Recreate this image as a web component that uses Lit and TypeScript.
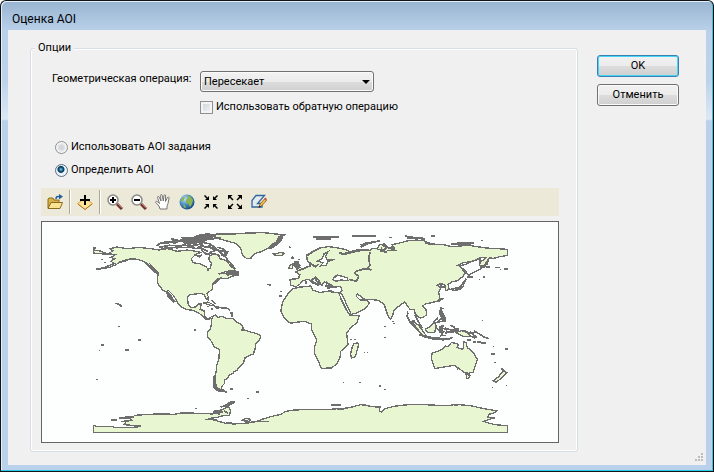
import { LitElement, html, css, svg } from "lit";
import { customElement, state } from "lit/decorators.js";

// Map geometry is in thirds of a map unit. The eastern half has its own origin.
const WEST_LAND = [
  // North and Central America
  "M75 95L86 86 78 80 100 75 130 80 165 76 200 80 225 84 250 80 280 88 310 84 335 88 350 91 334 98 322 110 326 122 350 126 365 133 372 142 379 138 382 124 374 112 376 102 390 96 402 98 408 110 418 113 430 118 440 134 453 140 450 147 428 148 404 156 425 154 432 160 446 150 464 156 462 160 445 162 428 170 408 168 398 180 386 188 386 200 378 207 368 214 373 224 372 234 364 228 362 220 350 214 335 216 318 218 311 226 312 246 322 257 335 255 342 246 352 246 348 262 360 266 362 284 372 290 380 286 376 292 366 292 354 280 342 272 326 265 306 262 294 256 284 248 278 236 268 220 254 206 250 208 262 222 270 238 262 234 254 224 246 210 236 204 224 188 220 180 222 155 212 146 200 136 190 124 175 116 155 111 135 111 122 118 108 121 92 130 76 136 55 140 35 142 55 138 75 131 92 124 80 118 92 110 80 106 95 98Z",
  // South America
  "M382 294L386 284 394 279 402 286 415 283 430 290 448 290 458 300 470 306 476 314 480 324 500 330 522 336 530 342 527 354 516 364 514 378 508 396 494 402 483 408 478 424 466 434 458 446 450 450 448 454 436 458 430 470 422 474 422 484 414 492 412 500 418 504 428 510 408 508 394 502 389 492 390 470 396 452 398 430 405 410 406 382 390 374 382 358 370 344 370 330 380 320 382 306Z",
  // Greenland
  "M378 40L400 36 450 36 490 33 540 32 575 36 605 38 590 42 585 52 588 60 572 68 560 76 550 80 535 88 520 92 508 98 502 108 490 110 482 106 474 96 472 84 466 74 455 64 440 60 425 56 405 50Z",
  // Antarctica
  "M28 631V611H34V614H88V617H135L168 614V612L120 608 126 600 112 598 144 596 140 590 104 588 128 585 148 584 152 580 200 577 270 577 292 573 350 574 386 576 400 568 420 560 434 554 440 566 436 580 412 582 400 586 372 590 390 594 404 598 424 604 450 606 480 604 510 601 534 592 560 584 590 577 606 568 630 564 660 563 690 562 730 563 760 560 790 558 808 554 830 548 850 550 860 554 888 555 886 568 892 570 904 560 930 553 960 549 1000 547 1040 549 1096 551 1112 547 1150 550 1170 553 1190 558 1218 563 1238 566 1234 571 1215 577 1212 585 1232 588 1216 592 1198 598 1216 604 1234 608 1270 611V631Z",
  // Iceland, Cuba, Aleutian end, Antarctic bay
  "M564 94L575 96 588 91 601 94 596 100 574 100ZM357 243L372 240 392 250 380 250ZM394 254L408 256 400 260ZM28 84L45 86 62 92 78 98 60 96 30 94ZM474 596L484 589 500 592 496 598Z",
];

const EAST_LAND = [
  // Eurasia
  "M62 190L60 172 85 170 90 158 76 150 88 145 100 140 118 132 122 124 112 118 110 102 122 94 135 86 150 78 175 74 200 77 225 82 236 88 228 96 208 92 216 98 238 94 262 88 280 84 298 86 306 80 322 80 328 68 345 66 356 78 374 80 366 68 385 64 400 60 415 56 440 54 460 56 485 66 520 68 546 74 570 72 600 70 620 74 650 78 712 82 712 100 690 104 668 110 658 106 652 126 636 138 628 130 634 118 648 108 632 106 610 118 580 122 562 130 578 136 588 150 578 164 562 176 545 180 534 188 538 202 528 206 522 188 510 184 502 190 512 198 506 212 510 230 500 238 484 242 466 246 458 252 468 262 470 278 460 286 450 288 436 276 432 262 420 262 410 248 404 240 390 250 372 264 368 280 362 292 354 282 346 258 342 246 325 235 300 232 284 232 262 216 258 222 270 234 290 234 298 244 285 260 262 272 242 278 236 262 222 240 212 222 208 212 216 206 212 194 190 195 176 194 168 186 172 182 162 180 156 190 146 184 134 170 124 172 134 182 146 190 126 182 116 172 98 176 90 186 78 194Z",
  // Africa
  "M65 202L84 196 122 192 128 204 150 212 168 208 208 212 214 236 228 262 240 280 268 280 262 300 240 320 230 334 234 368 212 388 210 408 200 426 184 438 154 439 146 420 134 394 133 378 140 356 134 340 124 322 124 306 104 298 84 300 62 304 46 292 32 268 38 240 52 218Z",
  // Madagascar, Australia, New Guinea, Borneo, New Zealand, Tasmania, Malaya
  "M246 378L252 366 262 362 266 368 256 404 244 408 242 394Z",
  "M486 394L502 388 520 380 526 372 534 374 544 362 560 364 566 368 562 376 576 382 580 378 582 360 588 362 592 378 600 382 610 392 622 412 614 436 610 450 594 454 580 450 566 438 552 430 528 434 494 440 490 426 484 410Z",
  "M550 326L562 330 576 326 592 332 604 344 582 344 564 336ZM466 322L480 314 494 300 498 312 494 332 474 332ZM670 476L686 464 700 446 710 452 696 466 678 482ZM588 456L600 460 596 470 590 468ZM426 296L446 310 468 340 460 342 442 324Z",
  // Great Britain, Ireland, Japan, Java
  "M74 120L84 118 88 134 98 142 82 146 78 136ZM58 132L68 126 68 140 56 140ZM540 202L556 198 572 194 584 178 588 170 578 196 560 206ZM446 338L470 342 500 350 530 350 520 354 480 350Z",
];

const EAST_SEAS = [
  "M188 172L200 160 214 162 232 168 234 176 212 174 198 178Z",
  "M142 118L156 110 162 96 174 90 166 104 172 114 194 112 174 118 168 130 150 132 160 122Z",
  "M206 214L214 214 242 272 238 278Z",
  "M606 118L632 110 628 124 634 140 620 146 596 160 586 146 568 132 590 126Z",
];

const WEST_COAST = [
  "M218 72L232 62 250 64 270 56 286 58 300 48 320 50 350 38 378 36 M226 76L256 70 290 72 310 62 344 68 370 52 410 48 M240 60L270 62 300 54 340 58 360 44 396 42 M290 46L330 46 360 40",
  "M222 66L250 58 276 64 M234 80L262 76 M262 50L300 60 326 72 350 66 M276 80L300 68 334 78 M306 58L330 80 352 78 372 88 M344 58L362 76 384 70 396 80",
  "M230 80L280 76 318 76 338 80 350 72 376 76 392 84 M350 82L366 96 390 94 408 102 M360 62L380 66 390 78 408 86 430 92 424 104 412 98 M376 92L400 84 418 98 434 88 M400 76L416 80 432 96",
  "M330 98L346 104 354 98 M424 104L436 120 452 138 M184 122L220 152 M190 128L222 158 M248 210L274 240 M106 120L136 112 M386 186L404 168 M372 138V146",
  "M92 244L104 246 114 254 M550 187L562 190 M566 78L592 54 596 42 M438 272H444V286M382 234L394 246M410 258H428L438 264 M372 226V234",
  "M392 460V498L426 510 M410 556L452 538 M386 570H416 M290 572H330 M364 592H398 M104 590L150 584 M206 576H258M80 594H100M500 598H556M426 602H444 M404 570V580M420 566L432 574",
];

const EAST_COAST = [
  "M128 44H206 M138 50H184 M246 42H318 M272 76L290 66 330 56 M404 42L430 46 464 52 M410 48H458 M560 62H612 M356 46H366 M482 42H496M544 66H604 M272 70L292 62 312 60 M224 94L262 84 298 82",
  "M100 140L124 130 M118 124L136 134 146 126 M560 206L590 170 M640 138L656 110 M576 142L590 156 M590 164H608 M508 184L516 196 528 190 M502 240L520 228 M110 100L126 90 150 78 M464 62L486 68",
  "M116 172L138 186 152 188 146 174 134 164 M168 180L184 190 M188 170L204 158 M174 206L186 208M166 192H190 M132 168L150 176 M172 188V198L186 196 M108 186V178",
  "M300 90L296 110 300 130 294 138 304 144 284 140 258 148 254 154 266 162 260 178 236 172 M320 82L342 84 350 76 336 70 M350 86L374 84 362 74 M330 88L352 90M334 74V88",
  "M420 300L440 320 462 344 540 352 M410 280L420 300 434 296 M498 316L512 330 M524 318L560 330 M510 340H528 M524 326L510 344 M600 330L620 346 M612 326L644 346 658 350",
  "M512 318L530 322 528 336 M536 322L566 324 M532 330H552 M540 310L556 316 M536 352L548 346 M580 324L600 334 622 330 M600 342L616 348 M434 278L446 300 456 318 M412 268V282",
  "M512 254L516 276 528 290 M510 276L526 296 504 300 518 284 M634 132L660 136 M676 136H690 M66 104H70M56 74H60M694 440L708 450 M488 302L504 288",
];

const DARK_BLOBS = [
  "M290 52L330 44 360 36 396 38 384 48 366 52 356 66 336 62 320 66 300 60Z",
  "M584 40L594 44 586 62 562 80 550 78 562 66 574 60Z M196 124L226 152 220 158 198 136Z M474 318L484 324 470 328Z",
  "M388 462H396L398 494 418 506 426 512 398 508 388 496Z M414 554L438 538 456 540 430 556Z M388 566L414 562 412 574 390 576Z",
  "M432 144L464 146 466 158 452 160 424 156Z M246 206L258 214 274 238 268 242 250 224Z",
];
const DARK_BLOBS_EAST = [
  "M506 266L516 262 528 290 526 302 514 294Z M60 128L84 118 92 130 84 142 72 134Z",
  "M132 42H180V50H140ZM560 432L568 438 562 444ZM116 122L134 126 128 134Z M508 312L520 314 518 330 508 328Z M556 198L576 196 574 204 556 206Z",
];

// Islets: x, y, width
const ISLETS: number[][] = [
  [102, 313, 5], [162, 350, 9], [50, 367, 10], [44, 385, 5], [124, 380, 10], [330, 320, 7], [36, 472, 5],
  [438, 498, 10], [516, 508, 10], [490, 529, 6], [334, 558, 5], [616, 74, 6], [622, 104, 7], [642, 110, 5],
  [588, 206, 5], [586, 220, 8], [52, 110, 5], [60, 120, 5], [28, 74, 8], [368, 252, 6], [380, 258, 8],
  [900, 313, 5], [900, 345, 5], [924, 298, 6], [926, 303, 6], [840, 390, 4], [848, 390, 5], [776, 480, 5],
  [826, 480, 5], [884, 488, 8], [900, 502, 5], [798, 352, 5], [810, 352, 5], [1074, 257, 5], [1194, 295, 4],
  [1226, 371, 5], [1262, 379, 9], [1222, 392, 12], [1230, 420, 5], [1224, 496, 4], [1266, 490, 4],
  [1248, 140, 4], [1260, 138, 12], [1196, 162, 8], [1184, 172, 4], [1190, 54, 6], [970, 272, 4], [972, 288, 4],
  [1180, 356, 12], [1192, 360, 14], [1148, 352, 12], [1168, 358, 8], [1110, 318, 16], [1064, 326, 10], [1072, 310, 8],
  [740, 547, 30], [1110, 545, 12], [760, 559, 20],
];

const ICONS = {
  open: svg`<path d="M1 14V5l1-1h4l1 2h5v3" fill="#d9b24a" stroke="#8a6a1c"/><path d="M1 14.500L4 8.500h11.500L13 14.500Z" fill="#fbe391" stroke="#8a6a1c"/><path d="M9 5c0-3 2-2.500 4-2.500" fill="none" stroke="#235f9e" stroke-width="1.500"/><path d="M12 0l4 2.500-4 3z" fill="#235f9e"/>`,
  add: svg`<path d="M8 4.500L15.500 9.500 8 15.500 .5 9.500Z" fill="#ffe397" stroke="#dfa64b"/><path d="M1 10L8 15.500l7-5.500" fill="none" stroke="#a87831"/><path d="M7 1h2v4h4v2H9v4H7V7H3V5h4z" fill="#000"/>`,
  zoomIn: svg`<path d="M10 10l5 5" stroke="#70302c" stroke-width="3"/><path d="M11 10l4 4" stroke="#c08078"/><circle cx="6" cy="6" r="5" fill="#fff" stroke="#888" stroke-width="1.500"/><path d="M3 6h6M6 3v6" stroke="#000" stroke-width="2"/>`,
  zoomOut: svg`<path d="M10 10l5 5" stroke="#70302c" stroke-width="3"/><path d="M11 10l4 4" stroke="#c08078"/><circle cx="6" cy="6" r="5" fill="#fff" stroke="#888" stroke-width="1.500"/><path d="M3 6h6" stroke="#000" stroke-width="2"/>`,
  pan: svg`<path d="M5 15L4 12 .8 8.500c-.5-1.200 1-1.600 1.800-.7L4.500 9.500 2.500 3.500c-.2-1.300 1.300-1.500 1.700-.4L6 7 5.600 1.500c0-1.300 1.500-1.300 1.700 0L8.300 7 9 1.600c.2-1.200 1.600-1 1.600.2L10.500 7.500 12.500 3.500c.6-1 1.800-.5 1.500.6L13 9.500 12 12v3Z" fill="#fff" stroke="#555" stroke-width=".8"/>`,
  globe: svg`<defs><radialGradient id="sea" cx=".35" cy=".3" r=".75"><stop offset="0" stop-color="#c4e2f8"/><stop offset=".5" stop-color="#4a8cc8"/><stop offset="1" stop-color="#1c4a80"/></radialGradient></defs><circle cx="8" cy="8" r="7.500" fill="url(#sea)"/><path d="M8 1.500l3 .5 3 4-1 4-2 3-1.500-3L7 9l0-3 2-2zM2 5l3-2 1 1-2 3-2 1zM4 10l2 1 1 3-2-.5z" fill="#8ab552"/>`,
  shrink: svg`<path d="M1.500 1.500l4 4M14.500 1.500l-4 4M1.500 14.500l4-4M14.500 14.500l-4-4" stroke="#000" stroke-width="1.500"/><path d="M6 2v4H2zM10 2v4h4zM6 14v-4H2zM10 14v-4h4z" fill="#000"/>`,
  expand: svg`<path d="M2 2l4 4M14 2l-4 4M2 14l4-4M14 14l-4-4" stroke="#000" stroke-width="1.500"/><path d="M1 1h4.500L1 5.500zM15 1h-4.500l4.500 4.500zM1 15h4.500l-4.500-4.500zM15 15h-4.500l4.500-4.500z" fill="#000"/>`,
  edit: svg`<path d="M1 13V6.500l4-5h8.500L6.500 9.500H11V13z" fill="#e4ebef" stroke="#2f679c" stroke-width="1.300"/><path d="M8 13l1-3L13.500 5l2 1.500L10.500 12z" fill="#f0bd4c" stroke="#8c5a20" stroke-width=".8"/><path d="M13 5l1.200-1.500L16 5l-1 1.600z" fill="#c94f3e"/><path d="M7.500 14l1-2.500 1.500 1.200z" fill="#222"/>`,
};

@customElement("world-map")
class WorldMap extends LitElement {
  static styles = css`
    :host { display: block; border: 1px solid #646464; background: #fdfefe; }
    .map { display: block; width: 100%; height: auto; shape-rendering: crispEdges; }
    .land { fill: #e9f6d2; stroke: #6e6e6e; stroke-width: 4; }
    .sea { fill: #fdfefe; stroke: #6e6e6e; stroke-width: 4; }
    .coast { fill: none; stroke: #6e6e6e; stroke-width: 5; }
    .blob { fill: #6e6e6e; }
  `;
  render() {
    const paths = (list: string[], cls: string) => list.map((d) => svg`<path class=${cls} d=${d}/>`);
    return html`
      <svg class="map" viewBox="-126 0 1548 660" role="img" aria-label="Карта мира">
        ${paths(WEST_LAND, "land")}${paths(WEST_COAST, "coast")}${paths(DARK_BLOBS, "blob")}
        <g transform="translate(558 0)">
          ${paths(EAST_LAND, "land")}${paths(EAST_SEAS, "sea")}${paths(EAST_COAST, "coast")}${paths(DARK_BLOBS_EAST, "blob")}
        </g>
        ${ISLETS.map(([x, y, w]) => svg`<rect class="blob" x=${x} y=${y} width=${w} height=${w > 6 ? 6 : 3}/>`)}
      </svg>
    `;
  }
}

@customElement("app-root")
class AppRoot extends LitElement {
  @state() private mode = "define";

  static styles = css`
    :host { display: block; font: 11px/16px Roboto, "Noto Sans", sans-serif; color: #000; }
    * { box-sizing: border-box; }
    button, select, input { font: inherit; color: inherit; margin: 0; }
    .window {
      display: flex; flex-direction: column; min-height: 100vh; padding: 0 6px 6px;
      border: 1px solid #10151a; border-right-color: #000; border-radius: 6px 6px 0 0;
      box-shadow: inset -1px -1px #2cc9e6, inset 1px 1px #e6eff8;
      background: linear-gradient(#99b4d1, #b9d1ea 30px, #bcd3eb 80px, #dce8f5 118px, #b9d1ea 120px);
    }
    .title { margin: 0; padding: 10px 5px 3px; font-size: 12px; font-weight: 400; line-height: 16px; }
    .client { position: relative; flex: 1; display: flex; align-items: flex-start; gap: 19px; margin: 0 1px; padding: 10px 27px 12px 22px; background: #f0f0f0; }
    .options { flex: 1; min-width: 0; margin: 0; padding: 15px 18px 8px 10px; border: 1px solid #d5dfe5; border-radius: 3px; box-shadow: inset 0 0 0 1px #fff; }
    .legend { margin-left: -6px; padding: 0 3px; background: #f0f0f0; }
    .form { display: grid; grid-template-columns: 148px 1fr; row-gap: 7px; padding-left: 11px; }
    .pick { position: relative; display: block; width: 174px; }
    .pick::after { content: ""; position: absolute; right: 4px; top: 9px; border: 4px solid transparent; border-top-color: #000; border-bottom: 0; pointer-events: none; }
    .select { appearance: none; display: block; width: 100%; height: 21px; padding: 0 20px 0 3px; border: 1px solid #707070; border-radius: 3px; }
    .select, .button { background: linear-gradient(#f2f2f2, #ebebeb 50%, #dddddd 50%, #cfcfcf); box-shadow: inset 0 0 0 1px #fafafa; }
    .inverse { grid-column: 2; }
    .choice { display: flex; align-items: center; gap: 3px; }
    .check, .radio { appearance: none; flex: none; width: 13px; height: 13px; border: 1px solid #8e8f8f; }
    .check { background: linear-gradient(135deg, #cbcfd5, #f6f6f6); box-shadow: inset 0 0 0 2px #f4f4f4; }
    .radio { border-radius: 50%; background: radial-gradient(#d4d6da 2px, #f6f6f6 5px); }
    .radio:checked { border-color: #5b6f80; background: radial-gradient(circle at 45% 40%, #7fd4f5, #11577f 2px, #0b3553 3px, #e8f2f8 4px); }
    .modes { display: flex; flex-direction: column; gap: 7px; margin: 24px 0 10px 14px; }
    .tools { display: flex; align-items: center; height: 28px; margin-bottom: 5px; padding-left: 2px; background: #ece9d8; }
    .tool { display: grid; place-items: center; width: 24px; height: 24px; padding: 0; border: 0; background: none; }
    .divider { width: 2px; height: 24px; margin: 0 2px; background: #aca899; border-right: 1px solid #fff; }
    .actions { display: flex; flex-direction: column; gap: 7px; padding-top: 15px; }
    .button { width: 82px; height: 22px; padding: 0; border: 1px solid #707070; border-radius: 3px; }
    .primary { border-color: #3c7fb1; box-shadow: inset 0 0 0 1px #47d5f7; }
    .grip { position: absolute; right: 2px; bottom: 2px; }
  `;

  private tool(label: string, icon: unknown) {
    return html`<button class="tool" type="button" aria-label=${label}>
      <svg width="16" height="16" viewBox="0 0 16 16">${icon}</svg>
    </button>`;
  }

  private radio(value: string, label: string) {
    return html`<label class="choice">
      <input class="radio" type="radio" name="mode" .checked=${this.mode === value} @change=${() => (this.mode = value)} />${label}
    </label>`;
  }

  render() {
    return html`
      <div class="window">
        <h1 class="title">Оценка AOI</h1>
        <main class="client">
          <fieldset class="options">
            <legend class="legend">Опции</legend>
            <div class="form">
              <label for="operation">Геометрическая операция:</label>
              <span class="pick">
                <select class="select" id="operation"><option>Пересекает</option></select>
              </span>
              <label class="choice inverse"><input class="check" type="checkbox" />Использовать обратную операцию</label>
            </div>
            <div class="modes">
              ${this.radio("task", "Использовать AOI задания")}
              ${this.radio("define", "Определить AOI")}
            </div>
            <div class="tools" role="toolbar">
              ${this.tool("Открыть", ICONS.open)}
              <span class="divider"></span>
              ${this.tool("Добавить данные", ICONS.add)}
              <span class="divider"></span>
              ${this.tool("Увеличить", ICONS.zoomIn)}
              ${this.tool("Уменьшить", ICONS.zoomOut)}
              ${this.tool("Переместить", ICONS.pan)}
              ${this.tool("Полный экстент", ICONS.globe)}
              ${this.tool("Фиксированное увеличение", ICONS.shrink)}
              ${this.tool("Фиксированное уменьшение", ICONS.expand)}
              ${this.tool("Нарисовать область", ICONS.edit)}
            </div>
            <world-map></world-map>
          </fieldset>
          <div class="actions">
            <button class="button primary" type="button">OK</button>
            <button class="button" type="button">Отменить</button>
          </div>
          <svg class="grip" width="10" height="10" viewBox="0 0 10 10">
            <path d="M7 0h2v2h-2zM4 3h2v2h-2zM7 3h2v2h-2zM1 6h2v2h-2zM4 6h2v2h-2zM7 6h2v2h-2z" fill="#bcbcbc" />
          </svg>
        </main>
      </div>
    `;
  }
}
